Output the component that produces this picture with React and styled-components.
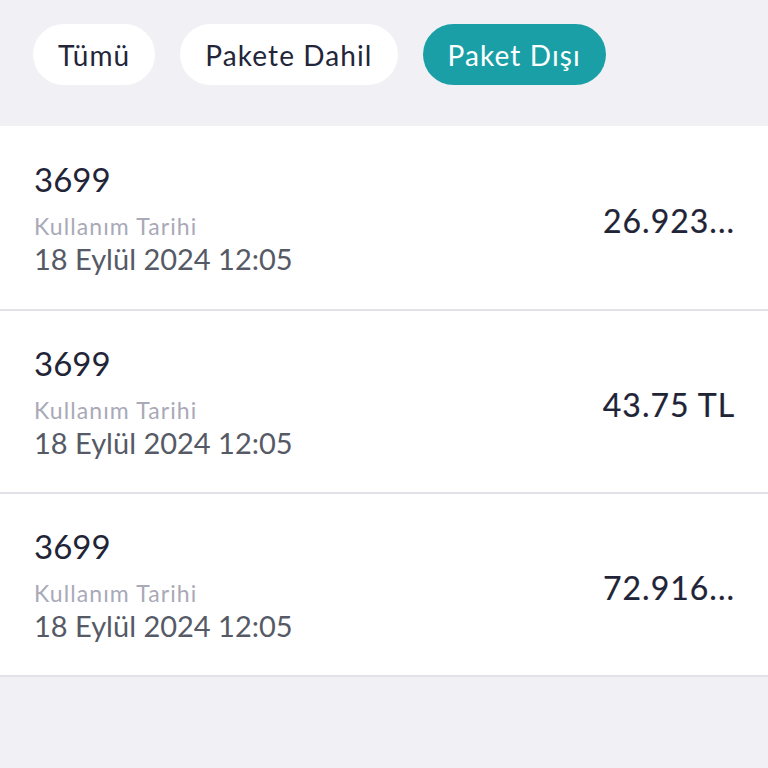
import React, { useState } from 'react'
import styled, { createGlobalStyle } from 'styled-components'

const GlobalStyle = createGlobalStyle`
  html, body {
    margin: 0;
    padding: 0;
    background-color: #f0f0f5;
  }
  body {
    font-family: 'Lato', 'Liberation Sans', sans-serif;
  }
`

const filters = ['Tümü', 'Pakete Dahil', 'Paket Dışı']

const usages = [
  { id: 1, number: '3699', date: '18 Eylül 2024 12:05', amount: '26.923...' },
  { id: 2, number: '3699', date: '18 Eylül 2024 12:05', amount: '43.75 TL' },
  { id: 3, number: '3699', date: '18 Eylül 2024 12:05', amount: '72.916...' }
]

const App = () => {
  const [active, setActive] = useState('Paket Dışı')
  return (
    <Page>
      <GlobalStyle />
      <FilterBar>
        {filters.map(f => (
          <Chip key={f} active={f === active} onClick={() => setActive(f)}>
            {f}
          </Chip>
        ))}
      </FilterBar>
      <List>
        {usages.map(u => (
          <Row key={u.id}>
            <Info>
              <Number>{u.number}</Number>
              <Label>Kullanım Tarihi</Label>
              <DateText>{u.date}</DateText>
            </Info>
            <Amount>{u.amount}</Amount>
          </Row>
        ))}
      </List>
    </Page>
  )
}

const Page = styled.div`
  min-height: 768px;
  background-color: #f0f0f5;
`

const FilterBar = styled.div`
  display: flex;
  gap: 25px;
  padding: 24px 33px 41px;
`

const Chip = styled.button`
  height: 61px;
  padding: 0 25px;
  border: none;
  border-radius: 31px;
  font-family: 'Lato', 'Liberation Sans', sans-serif;
  font-size: 28px;
  letter-spacing: 1.1px;
  color: ${props => (props.active ? '#ffffff' : '#23263a')};
  background-color: ${props => (props.active ? '#1a9fa7' : '#ffffff')};
  cursor: pointer;
`

const List = styled.div`
  background-color: #ffffff;
  border-bottom: 2px solid #e1e1e8;
`

const Row = styled.div`
  display: flex;
  align-items: center;
  justify-content: space-between;
  height: 183px;
  padding: 0 34px;
  box-sizing: border-box;
  & + & {
    border-top: 2px solid #e1e1e8;
  }
`

const Info = styled.div`
  display: flex;
  flex-direction: column;
`

const Number = styled.div`
  font-size: 33px;
  line-height: 38px;
  color: #1f2437;
`

const Label = styled.div`
  font-size: 23px;
  line-height: 32px;
  letter-spacing: 1.1px;
  margin-top: 12px;
  color: #a9a9b8;
`

const DateText = styled.div`
  font-size: 29px;
  line-height: 34px;
  color: #555a66;
`

const Amount = styled.div`
  width: 134px;
  margin-right: -2px;
  margin-top: 6px;
  text-align: center;
  font-size: 32px;
  letter-spacing: 1px;
  -webkit-text-stroke: 0.2px #1f2437;
  color: #1f2437;
  white-space: nowrap;
`

export default App
